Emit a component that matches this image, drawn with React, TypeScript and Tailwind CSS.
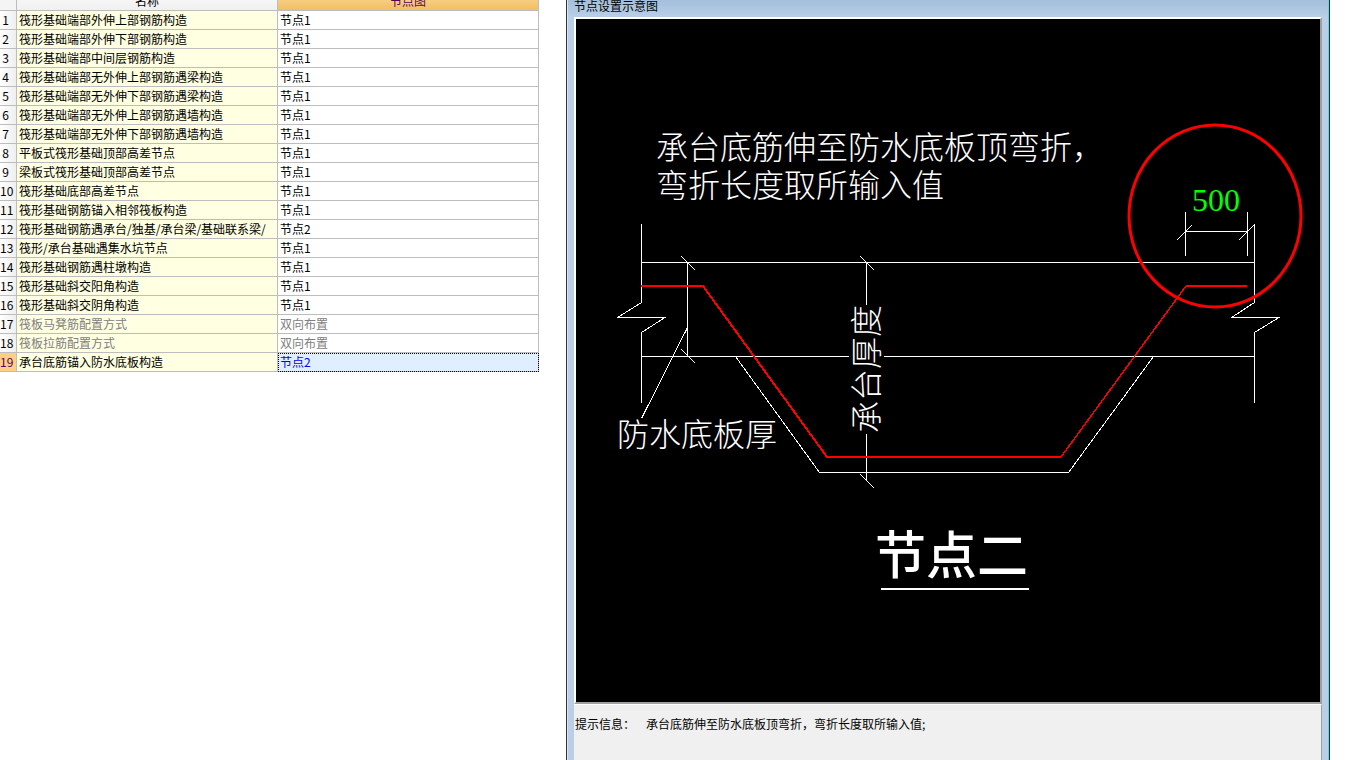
/**
 * NodeSettings - node table on the left, schematic of the selected node on the right
 */

import { useState } from "react";

interface NodeRow {
  id: number;
  name: string;
  node: string;
  disabled?: boolean;
}

const ROWS: NodeRow[] = [
  { id: 1, name: "筏形基础端部外伸上部钢筋构造", node: "节点1" },
  { id: 2, name: "筏形基础端部外伸下部钢筋构造", node: "节点1" },
  { id: 3, name: "筏形基础端部中间层钢筋构造", node: "节点1" },
  { id: 4, name: "筏形基础端部无外伸上部钢筋遇梁构造", node: "节点1" },
  { id: 5, name: "筏形基础端部无外伸下部钢筋遇梁构造", node: "节点1" },
  { id: 6, name: "筏形基础端部无外伸上部钢筋遇墙构造", node: "节点1" },
  { id: 7, name: "筏形基础端部无外伸下部钢筋遇墙构造", node: "节点1" },
  { id: 8, name: "平板式筏形基础顶部高差节点", node: "节点1" },
  { id: 9, name: "梁板式筏形基础顶部高差节点", node: "节点1" },
  { id: 10, name: "筏形基础底部高差节点", node: "节点1" },
  { id: 11, name: "筏形基础钢筋锚入相邻筏板构造", node: "节点1" },
  { id: 12, name: "筏形基础钢筋遇承台/独基/承台梁/基础联系梁/", node: "节点2" },
  { id: 13, name: "筏形/承台基础遇集水坑节点", node: "节点1" },
  { id: 14, name: "筏形基础钢筋遇柱墩构造", node: "节点1" },
  { id: 15, name: "筏形基础斜交阳角构造", node: "节点1" },
  { id: 16, name: "筏形基础斜交阴角构造", node: "节点1" },
  { id: 17, name: "筏板马凳筋配置方式", node: "双向布置", disabled: true },
  { id: 18, name: "筏板拉筋配置方式", node: "双向布置", disabled: true },
  { id: 19, name: "承台底筋锚入防水底板构造", node: "节点2" },
];

function NodeTable() {
  const [selected, setSelected] = useState(19);

  return (
    <div className="min-w-0 overflow-hidden">
      <table className="-mt-2 w-full table-fixed border-separate border-spacing-0 text-xs leading-[18px] whitespace-nowrap">
        <colgroup>
          <col className="w-[17px]" />
          <col />
          <col />
        </colgroup>
        <thead>
          <tr>
            <th className="h-[19px] border-r border-b border-[#bdbdbd] bg-[#f4f4f4] p-0" />
            <th className="border-r border-b border-[#bdbdbd] bg-linear-to-b from-[#fafafa] to-[#f0f0f0] p-0 font-normal">
              名称
            </th>
            <th className="border-r border-b border-[#bdbdbd] bg-linear-to-b from-[#fadb9a] to-[#f2be60] p-0 font-normal text-[#5a005a]">
              节点图
            </th>
          </tr>
        </thead>
        <tbody>
          {ROWS.map((row) => {
            const active = row.id === selected;
            return (
              <tr key={row.id} onClick={() => !row.disabled && setSelected(row.id)}>
                <td
                  className={`h-[19px] border-r border-b border-[#bdbdbd] py-0 pl-0 text-right ${
                    active ? "bg-[#fccf85] text-[#5a005a]" : "bg-linear-to-r from-white to-[#efefef]"
                  } ${row.id < 10 ? "pr-[7px]" : "pr-1"}`}
                >
                  {row.id}
                </td>
                <td
                  className={`overflow-hidden border-r border-b border-[#bdbdbd] bg-[#ffffe1] px-0.5 py-0 ${
                    row.disabled ? "text-[#808080]" : ""
                  }`}
                >
                  {row.name}
                </td>
                <td
                  className={`border-r border-b border-[#bdbdbd] px-0.5 py-0 ${
                    active ? "bg-[#e0efff] text-[#0000ff] outline-1 -outline-offset-1 outline-dotted outline-black" : ""
                  } ${row.disabled ? "text-[#808080]" : ""}`}
                >
                  {row.node}
                </td>
              </tr>
            );
          })}
        </tbody>
      </table>
    </div>
  );
}

function Schematic() {
  return (
    <svg viewBox="0 0 744 683" className="block w-full bg-black" role="img" aria-label="节点二">
      {/* Slab outline, break lines and dimensions */}
      <g fill="none" stroke="#fff" strokeWidth="1" shapeRendering="crispEdges">
        <path d="M65.5 205V283.5L41.5 298.5H89L65.5 313.5V384" />
        <path d="M678.5 205V283.5L655.5 298.5H703L678.5 313.5V384" />
        <path d="M65.5 243.5H678.5" />
        <path d="M65.5 337.5H273M308 337.5H678.5" />
        <path d="M159.5 337.5L243.5 453.5H492.5L577.5 337.5" />
        <path d="M111.5 243V338M105.5 237.5L119.5 251.5M105.5 330.5L119.5 344.5" />
        <path d="M111.5 308.5L65.5 399.5" />
        <path d="M290.5 243V286M290.5 415V462M284.5 237.5L298.5 251.5M284.5 455.5L298.5 469.5" />
        <path d="M609.5 193V237M671.5 193V237M609.5 212.5H671.5" />
        <path d="M600.5 221.5L615.5 206.5M662.5 221.5L678.5 205.5" />
      </g>

      {/* Rebar */}
      <g fill="none" stroke="#f00" shapeRendering="crispEdges">
        <path d="M65 267H127L251 438H485" strokeWidth="2" />
        <path d="M485 438L610 267" strokeWidth="1.5" />
        <path d="M610 267H671" strokeWidth="2" />
      </g>
      <ellipse cx="639" cy="197" rx="86" ry="91" fill="none" stroke="#f00" strokeWidth="3" />

      {/* Labels */}
      <g fill="#fff" fontSize="32" fontWeight="300">
        <text>
          <tspan x="80" y="140">承台底筋伸至防水底板顶弯折，</tspan>
          <tspan x="80" y="178">弯折长度取所输入值</tspan>
        </text>
        <text x="41" y="427">防水底板厚</text>
        <text transform="translate(302 414) rotate(-90)">承台厚度</text>
      </g>
      <text x="616" y="192" fill="#0f0" fontSize="32" fontFamily="Liberation Serif, serif">
        500
      </text>
      <text x="299" y="555" fill="#fff" fontSize="51" fontWeight="500">
        节点二
      </text>
      <path d="M305 570H453" stroke="#fff" strokeWidth="2" />
    </svg>
  );
}

function SchematicPanel() {
  return (
    <section className="flex min-w-0 flex-col border-x border-[#2b3238] bg-[#b9cfe8]">
      <div className="flex flex-1 flex-col border-r border-l border-r-[#4fd8f0] border-l-[#d9e8f5] text-xs">
        <h2 className="h-[17px] bg-linear-to-b from-[#a3bfdb] to-[#b9cfe8] px-1.5 leading-3">
          节点设置示意图
        </h2>
        <div className="mx-1.5 flex flex-1 flex-col bg-[#f0f0f0]">
          <div className="border-2 border-t-white border-r-[#a0a0a0] border-b-[#a0a0a0] border-l-white">
            <Schematic />
          </div>
          <p className="flex-1 border-t border-r border-t-white border-r-[#a0a0a0] py-[11px] pl-px leading-4">
            提示信息：<span className="ml-[11px]">承台底筋伸至防水底板顶弯折，弯折长度取所输入值;</span>
          </p>
        </div>
      </div>
    </section>
  );
}

export default function App() {
  return (
    <main className="grid min-h-screen grid-cols-[539fr_764fr] gap-[27px] bg-white pr-[31px] font-['Noto_Sans_CJK_SC',sans-serif] text-black">
      <NodeTable />
      <SchematicPanel />
    </main>
  );
}
